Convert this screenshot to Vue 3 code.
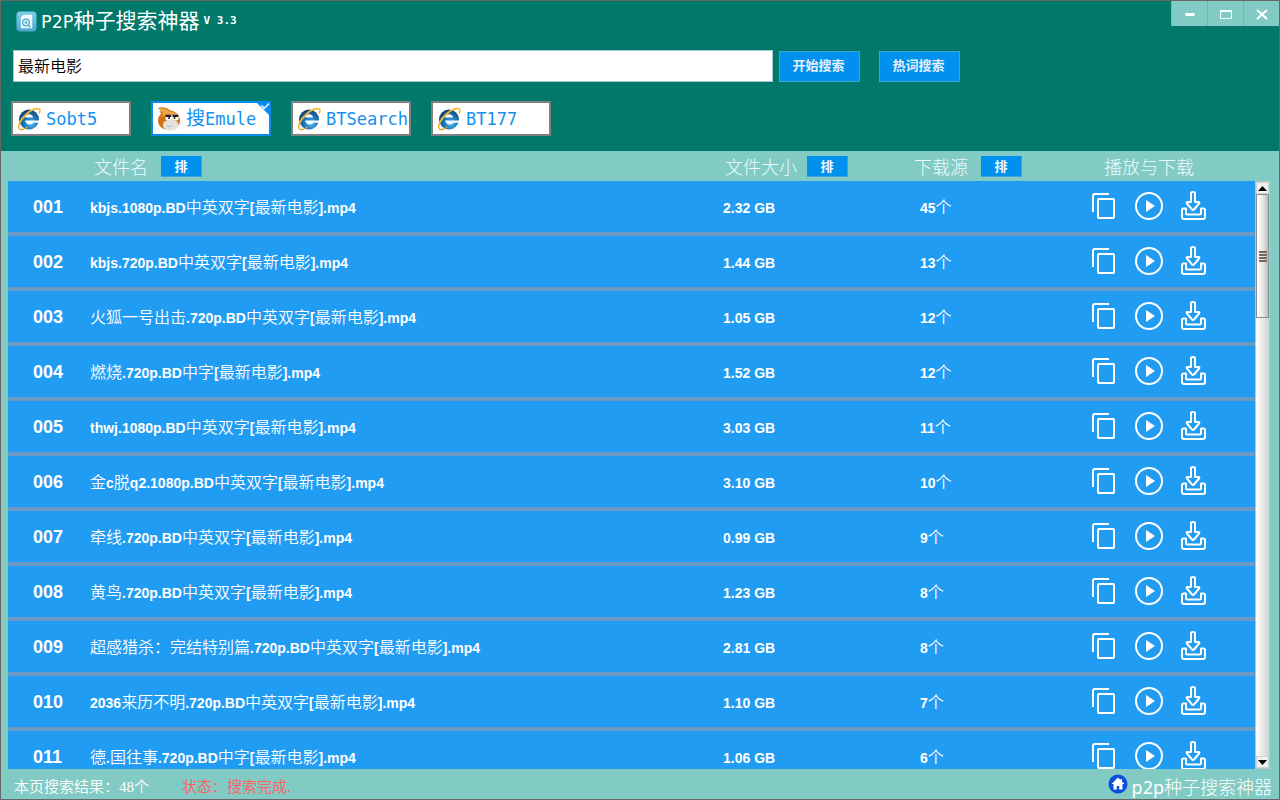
<script setup>
import { ref } from 'vue'

const keyword = ref('最新电影')
const engine = ref(1)
const engines = [
  { name: 'Sobt5', icon: 'ie' },
  { name: '搜Emule', icon: 'donkey' },
  { name: 'BTSearch', icon: 'ie' },
  { name: 'BT177', icon: 'ie' },
]

const rows = [
  ['kbjs.1080p.BD中英双字[最新电影].mp4', '2.32 GB', 45],
  ['kbjs.720p.BD中英双字[最新电影].mp4', '1.44 GB', 13],
  ['火狐一号出击.720p.BD中英双字[最新电影].mp4', '1.05 GB', 12],
  ['燃烧.720p.BD中字[最新电影].mp4', '1.52 GB', 12],
  ['thwj.1080p.BD中英双字[最新电影].mp4', '3.03 GB', 11],
  ['金c脱q2.1080p.BD中英双字[最新电影].mp4', '3.10 GB', 10],
  ['牵线.720p.BD中英双字[最新电影].mp4', '0.99 GB', 9],
  ['黄鸟.720p.BD中英双字[最新电影].mp4', '1.23 GB', 8],
  ['超感猎杀：完结特别篇.720p.BD中英双字[最新电影].mp4', '2.81 GB', 8],
  ['2036来历不明.720p.BD中英双字[最新电影].mp4', '1.10 GB', 7],
  ['德.国往事.720p.BD中字[最新电影].mp4', '1.06 GB', 6],
].map(([name, size, sources], i) => ({
  no: String(i + 1).padStart(3, '0'),
  name,
  size,
  sources,
}))

// Splits a string into Latin and Chinese runs so each gets its own face.
const runs = (text) =>
  text.match(/[\x20-\x7e]+|[^\x20-\x7e]+/g).map((t) => ({ t, cjk: t.charCodeAt(0) > 126 }))
</script>

<template>
  <div class="window">
    <header class="top">
      <div class="titlebar">
        <svg class="logo" viewBox="0 0 22 22" aria-hidden="true">
          <defs>
            <linearGradient id="lg" x1="0" y1="0" x2="0" y2="1">
              <stop offset="0" stop-color="#7fcde8" /><stop offset="1" stop-color="#4aa8cf" />
            </linearGradient>
          </defs>
          <rect x="0.5" y="0.5" width="21" height="21" rx="4" fill="url(#lg)" />
          <path d="M5 6.500L8 4h9v14H5z" fill="#eefaff" />
          <circle cx="10.500" cy="12" r="3.500" fill="#d8f1fa" stroke="#4fa9cc" stroke-width="1.300" />
          <circle cx="10.500" cy="12" r="1.300" fill="#4fa9cc" />
          <path d="M13 15l2 2" stroke="#4fa9cc" stroke-width="1.500" />
        </svg>
        <h1><span class="mono">P2P</span>种子搜索神器</h1>
        <span class="version">V 3.3</span>
        <div class="controls">
          <button type="button" aria-label="最小化">
            <svg viewBox="0 0 12 12"><path d="M1.500 6.500h9" stroke="#fff" stroke-width="3" /></svg>
          </button>
          <button type="button" aria-label="最大化">
            <svg viewBox="0 0 12 12"><path d="M0.500 10.500V2.500h11v8z" fill="none" stroke="#f2fffc" /><path d="M0 3h12" stroke="#f2fffc" stroke-width="2" /></svg>
          </button>
          <button type="button" aria-label="关闭">
            <svg viewBox="0 0 12 12"><path d="M1 2l10 9M11 2L1 11" stroke="#fff" stroke-width="2.200" /></svg>
          </button>
        </div>
      </div>

      <form class="search" @submit.prevent>
        <input v-model="keyword" type="text" aria-label="搜索关键词" />
        <button type="submit">开始搜索</button>
        <button type="button">热词搜索</button>
      </form>

      <nav class="engines">
        <button
          v-for="(e, i) in engines"
          :key="e.name"
          type="button"
          class="engine"
          :class="{ active: engine === i }"
          :aria-pressed="engine === i"
          @click="engine = i"
        >
          <svg v-if="e.icon === 'ie'" class="eicon" viewBox="0 0 24 24" aria-hidden="true">
            <defs>
              <radialGradient id="ie" cx="0.6" cy="0.7" r="0.75">
                <stop offset="0" stop-color="#4fc0f5" /><stop offset="0.45" stop-color="#1c78bd" /><stop offset="1" stop-color="#12385f" />
              </radialGradient>
            </defs>
            <circle cx="12" cy="12.500" r="10" fill="url(#ie)" />
            <path d="M8 10.600c.6-2.200 2-3.400 4.100-3.400s3.700 1.200 4 3.400z" fill="#fff" />
            <path d="M8 13.500H22.200l-.3 2.300h-5.200c-.9 1-2.200 1.600-3.900 1.600-2.600 0-4.400-1.500-4.800-3.900z" fill="#f4fbff" />
            <path d="M2.800 22.300C-.2 19.500 3.500 12.500 9.500 7S21.500.500 22.700 2.500c.6 1 .2 2.400-.6 4" fill="none" stroke="#f3bd3c" stroke-width="1.700" />
            <path d="M2.800 22.300c2 1 5-.4 7.700-2.300" fill="none" stroke="#e89c1c" stroke-width="1.400" />
          </svg>
          <svg v-else class="eicon" viewBox="0 0 24 24" aria-hidden="true">
            <path d="M1 1c4-1.500 9-.5 12 2.500 5.500.5 10 4.500 10 10 0 5-4 8.500-9.500 9.500C6.500 23.500 1 19.500 1 13.500 1 10.500 2.500 8 4.500 6.500L2 4.500l2.500-.3z" fill="#cf7218" />
            <path d="M2 1.500c4-.7 8 .3 10.500 3 4 0 7.500 2 9 5-5-3-12-4-17.500 1 .5-2 1.500-3 2.500-4z" fill="#f2a646" />
            <rect x="8.500" y="7" width="6.500" height="6.500" rx="1.800" fill="#fff" /><rect x="15" y="7" width="6.500" height="6.500" rx="1.800" fill="#fff" />
            <path d="M8.500 8.700h5.700M15.500 8.700h5.700" stroke="#2c1a10" stroke-width="2.400" />
            <path d="M12 10v2M17.500 10v2" stroke="#333" stroke-width="1.600" />
            <path d="M13.500 13c5 0 8 1.800 8 4.800 0 3.500-3.300 5.700-8 5.700-4.500 0-7.500-2.200-7.500-5.500S9 13 13.500 13z" fill="#e2e2e0" />
            <path d="M9.500 18.500l2.500 1 3-1" fill="none" stroke="#bbb" />
          </svg>
          <span><span v-for="(r, k) in runs(e.name)" :key="k" :class="{ mono: !r.cjk }">{{ r.t }}</span></span>
          <svg v-if="engine === i" class="tick" viewBox="0 0 14 14" aria-hidden="true">
            <path d="M0 0h14v14z" fill="#0a8cf0" /><path d="M5.500 3.500l2.500 3L13 1.500" fill="none" stroke="#fff" stroke-width="1.400" />
          </svg>
        </button>
      </nav>
    </header>

    <main class="results">
      <div class="viewport">
        <table>
          <colgroup>
            <col class="c-no" /><col /><col class="c-size" /><col class="c-src" /><col class="c-act" />
          </colgroup>
          <thead>
            <tr>
              <th></th>
              <th class="h-name"><div class="head">文件名<button type="button" aria-label="按文件名排序">排</button></div></th>
              <th><div class="head tight">文件大小<button type="button" aria-label="按文件大小排序">排</button></div></th>
              <th><div class="head">下载源<button type="button" aria-label="按下载源排序">排</button></div></th>
              <th class="h-act"><div class="head">播放与下载</div></th>
            </tr>
          </thead>
          <tbody>
            <tr v-for="row in rows" :key="row.no">
              <td class="no">{{ row.no }}</td>
              <td class="text"><span v-for="(r, k) in runs(row.name)" :key="k" :class="{ cjk: r.cjk }">{{ r.t }}</span></td>
              <td class="text">{{ row.size }}</td>
              <td class="text src">{{ row.sources }}<span class="cjk">个</span></td>
              <td>
                <div class="actions">
                  <button type="button" aria-label="复制">
                    <svg viewBox="0 0 30 30"><g fill="none" stroke="#fff" stroke-width="2"><path d="M3 21V5a2 2 0 0 1 2-2h14" /><rect x="8" y="8" width="16" height="19" rx="1" /></g></svg>
                  </button>
                  <button type="button" aria-label="播放">
                    <svg viewBox="0 0 30 30"><circle cx="15" cy="15" r="13" fill="none" stroke="#fff" stroke-width="2" /><path d="M12 9v12l9-6z" fill="#fff" /></svg>
                  </button>
                  <button type="button" aria-label="下载">
                    <svg viewBox="0 0 30 30"><g fill="none" stroke="#fff" stroke-width="2" stroke-linejoin="round"><path d="M13 2q0-1 2-1t2 1v9h3.500q1.500 0 .5 1.500l-5 6q-1 1-2 0l-5-6q-1-1.500.5-1.500H13z" /><path d="M8 17.500H5.500Q4 17.500 4 19v7q0 2 2 2h19q2 0 2-2v-7q0-1.500-1.500-1.500H23v5q0 1-1 1H9q-1 0-1-1z" /></g></svg>
                  </button>
                </div>
              </td>
            </tr>
          </tbody>
        </table>
      </div>
      <div class="scrollbar" aria-hidden="true">
        <div class="arrow"><svg viewBox="0 0 9 5"><path d="M0 5l4.500-5L9 5z" /></svg></div>
        <div class="track">
          <div class="thumb"><i></i><i></i><i></i><i></i></div>
        </div>
        <div class="arrow"><svg viewBox="0 0 9 5"><path d="M0 0l4.500 5L9 0z" /></svg></div>
      </div>
    </main>

    <footer class="status">
      <span>本页搜索结果：48个</span>
      <span class="state">状态：搜索完成.</span>
      <a href="#" class="home">
        <svg viewBox="0 0 20 20" aria-hidden="true"><circle cx="10" cy="10" r="9.500" fill="#0b50dc" /><path d="M10 3.500L3.500 10H5.500v5.500h3.300v-3.500h2.400v3.500h3.300V10h2L14 7.500V5h-1.500v1z" fill="#fff" /></svg>
        <span><span class="p2p">p2p</span>种子搜索神器</span>
      </a>
    </footer>
  </div>
</template>

<style>
body {
  margin: 0;
}
</style>

<style scoped>
* {
  box-sizing: border-box;
}
.window {
  display: flex;
  flex-direction: column;
  height: 100vh;
  overflow: hidden;
  border: 1px solid #666;
  background: #81cbc4;
  color: #fff;
  font-family: "Liberation Sans", "Noto Sans CJK SC", sans-serif;
}
button {
  margin: 0;
  padding: 0;
  border: 0;
  background: none;
  color: inherit;
  font: inherit;
}
.mono {
  font-family: "DejaVu Sans Mono", monospace;
}
.top {
  flex: none;
  height: 150px;
  background: #00796b;
}
.titlebar {
  display: flex;
  height: 40px;
  padding-left: 15px;
  align-items: center;
}
.logo {
  width: 21px;
  height: 21px;
}
h1 {
  margin: 0 0 0 4px;
  font-size: 21px;
  font-weight: 400;
  line-height: 24px;
  white-space: nowrap;
}
h1 .mono {
  font-size: 18px;
}
.version {
  margin-left: 4px;
  font: bold 11px/16px "DejaVu Sans Mono", monospace;
}
.controls {
  display: flex;
  align-self: flex-start;
  margin-left: auto;
  height: 25px;
  background: #81cbc4;
}
.controls button {
  display: flex;
  align-items: center;
  justify-content: center;
  width: 36px;
  border-left: 1px solid #6db8b0;
}
.controls svg {
  width: 12px;
  height: 12px;
}
.search {
  display: flex;
  height: 50px;
  padding: 9px 12px;
  align-items: center;
}
.search input {
  width: 760px;
  height: 32px;
  padding: 0 4px 2px;
  border: 1px solid #a5c6d8;
  background: #fff;
  color: #000;
  font: 350 16px "Noto Sans CJK SC", sans-serif;
  outline: 0;
}
.search button {
  width: 81px;
  height: 31px;
  margin: 0 13px 0 6px;
  padding: 0 2px 3px 0;
  border: 1px solid #3fa9c4;
  background: #0090ee;
  color: #e6f0ff;
  font-size: 13px;
  font-weight: 700;
}
.engines {
  display: flex;
  gap: 20px;
  padding: 10px;
}
.engine {
  position: relative;
  display: flex;
  align-items: center;
  gap: 5px;
  width: 120px;
  height: 35px;
  padding-left: 4px;
  border: 2px solid #808080;
  background: #fff;
  color: #1390f0;
  font-size: 19px;
  line-height: 30px;
  white-space: nowrap;
}
.engine.active {
  border-color: #0a8cf0;
}
.engine .mono {
  font-size: 17px;
}
.eicon {
  flex: none;
  width: 24px;
  height: 24px;
}
.tick {
  position: absolute;
  top: -1px;
  right: -1px;
  width: 14px;
  height: 14px;
}
.results {
  display: flex;
  flex: 1;
  min-height: 0;
  padding: 0 9px 0 7px;
}
.viewport {
  flex: 1;
  overflow: hidden;
}
table {
  width: 100%;
  table-layout: fixed;
  border-spacing: 0;
}
.c-no {
  width: 82px;
}
.c-size {
  width: 191px;
}
.c-src {
  width: 176px;
}
.c-act {
  width: 165px;
}
th {
  height: 30px;
  padding: 0;
  text-align: left;
  font: 300 18px "Noto Sans CJK SC", sans-serif;
}
.head {
  display: flex;
  height: 30px;
  align-items: center;
  gap: 13px;
  color: #eefaff;
}
.head.tight {
  gap: 10px;
  padding-left: 2px;
}
.h-name {
  padding-left: 4px;
}
.h-act {
  padding-left: 14px;
}
.head button {
  width: 41px;
  height: 21px;
  border: 1px solid #3fa2dc;
  border-width: 0 1px 1px 0;
  background: #0090ee;
  font-size: 13px;
  font-weight: 700;
  line-height: 20px;
}
td {
  height: 55px;
  padding: 0;
  border-bottom: 4px solid #6a9bc3;
  background: #219cf3;
  font-size: 14px;
  font-weight: 700;
  line-height: 24px;
  white-space: nowrap;
}
td.no {
  padding-left: 25px;
  font-size: 18px;
}
td.text {
  padding-top: 2px;
}
td.src {
  padding-left: 6px;
}
.cjk {
  font-size: 16px;
  font-weight: 350;
}
.actions {
  display: flex;
  gap: 14px;
  padding-bottom: 2px;
}
.actions button,
.actions svg {
  display: block;
  width: 30px;
  height: 30px;
}
.scrollbar {
  display: flex;
  flex-direction: column;
  width: 15px;
  margin-top: 30px;
  border: 1px solid #c4c4c4;
  background: linear-gradient(90deg, #fff, #d2d2d2);
}
.arrow {
  display: flex;
  align-items: center;
  justify-content: center;
  height: 12px;
  border: 1px solid #d0d0d0;
  background: #f2f2f2;
}
.arrow svg {
  width: 9px;
  height: 5px;
}
.track {
  flex: 1;
}
.thumb {
  display: flex;
  flex-direction: column;
  align-items: center;
  justify-content: center;
  gap: 1px;
  height: 124px;
  border: 1px solid #8c8c8c;
  background: linear-gradient(90deg, #fff, #e8e8e8 50%, #bcbcbc);
}
.thumb i {
  width: 8px;
  height: 2px;
  background: #6e6a62;
}
.status {
  display: flex;
  flex: none;
  height: 30px;
  padding: 0 7px 0 13px;
  align-items: center;
  font: 350 15px/24px "Liberation Serif", "Noto Sans CJK SC", serif;
}
.status > span {
  padding-top: 6px;
}
.state {
  margin-left: 33px;
  color: #ff5f5f;
}
.home {
  display: flex;
  align-items: center;
  margin-left: auto;
  gap: 4px;
  color: #fff;
  font: 300 18px/24px "Noto Sans CJK SC", sans-serif;
  text-decoration: none;
}
.home > span {
  padding-top: 5px;
}
.home svg {
  width: 20px;
  height: 20px;
}
.p2p {
  font-family: "Noto Sans", sans-serif;
  font-weight: 400;
}
</style>
